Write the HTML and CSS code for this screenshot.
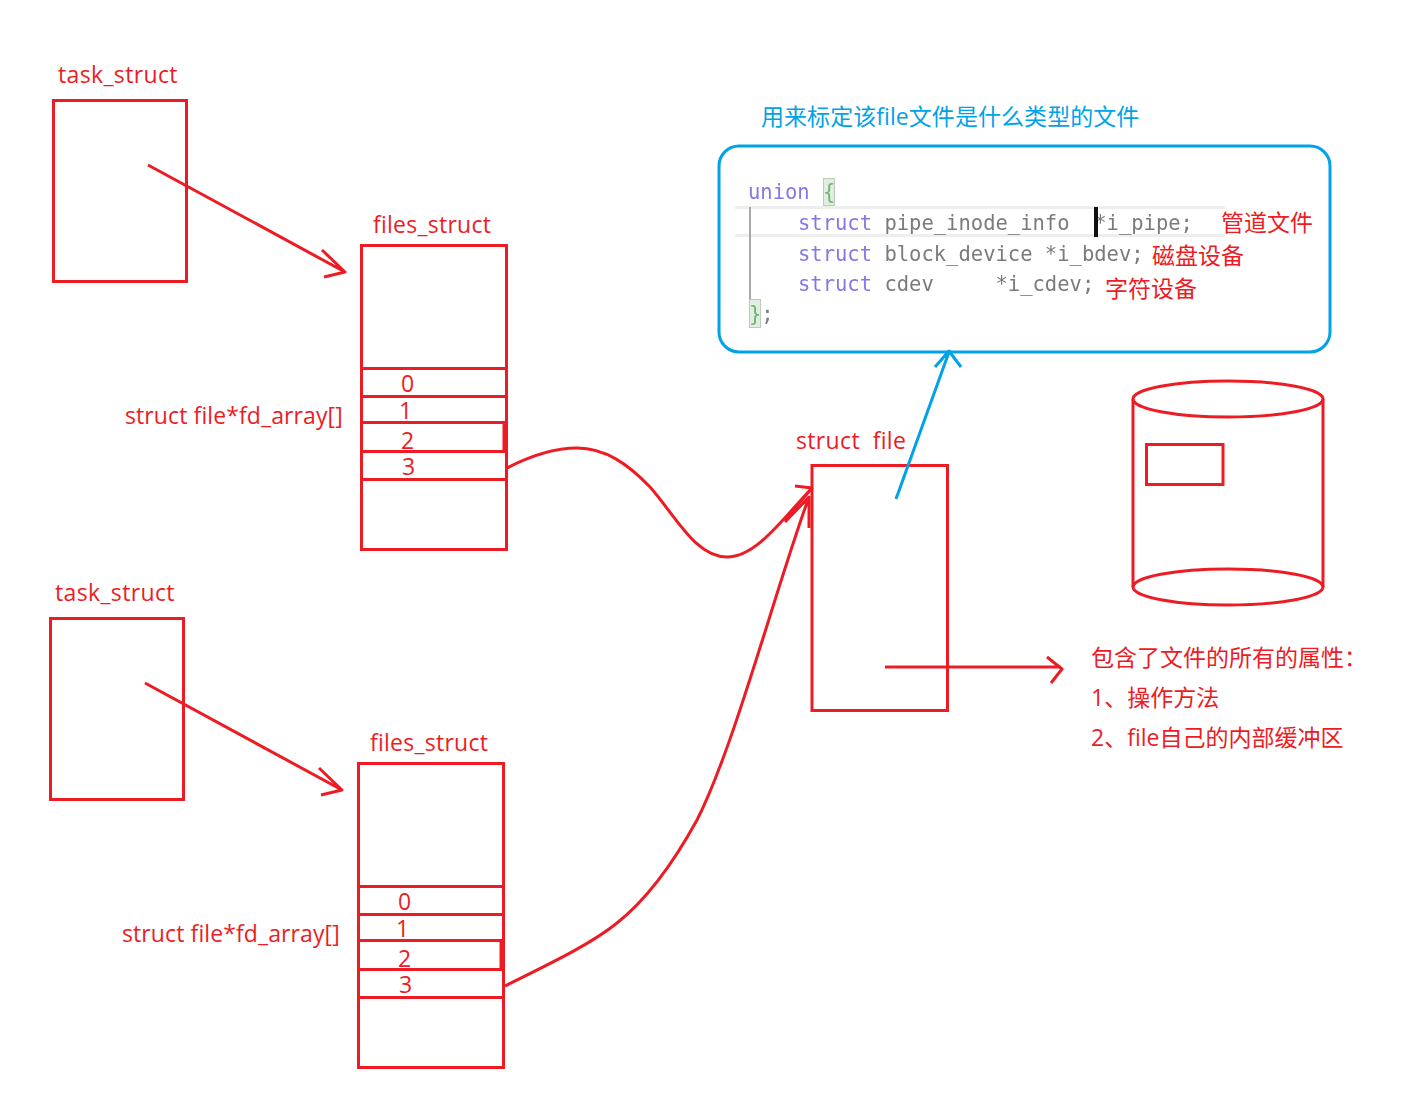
FILE: index.html
```html
<!DOCTYPE html>
<html lang="zh-CN">
<head>
<meta charset="utf-8">
<title>struct file</title>
<link rel="stylesheet" href="styles.css">
</head>
<body>
<svg class="canvas" width="1414" height="1115" viewBox="0 0 1414 1115" xmlns="http://www.w3.org/2000/svg">
  <defs>
    <g id="fdset">
      <text class="lbl latin wide" x="58" y="83">task_struct</text>
      <rect class="r" x="53.5" y="100.5" width="133" height="181"/>
      <path class="r line" d="M148 165 L345 272 M322 250 L345 272 L324 277"/>
      <text class="lbl latin" x="373" y="233">files_struct</text>
      <rect class="r" x="361.5" y="245.5" width="145" height="304"/>
      <path class="r" d="M362 368.500H506M362 396.500H506M362 422.500H506M362 451.500H506M362 479.500H506M504 423V451"/>
      <text class="lbl tight" x="125" y="424">struct file*fd_array[]</text>
      <text class="lbl mid" x="407.500" y="392">0</text>
      <text class="lbl mid" x="405.500" y="419">1</text>
      <text class="lbl mid" x="407.500" y="449">2</text>
      <text class="lbl mid" x="408.500" y="475">3</text>
    </g>
  </defs>

  <use href="#fdset"/>
  <use href="#fdset" x="-3" y="518"/>

  <path class="r line" d="M507 468 C532 455 555 448 577 448 C605 448 628 464 650 487 C675 515 695 557 727 557 C757 557 785 516 812 488 M795 486 L812 488 L785 520"/>
  <path class="r line" d="M505 986 C545 966 590 945 617 923 C650 897 675 860 697 820 C735 745 775 590 809 497 M785 522 L809 497 L809 528"/>

  <text class="lbl wide" x="796" y="449" xml:space="preserve">struct  file</text>
  <rect class="r" x="812" y="465.500" width="135.500" height="245"/>
  <path class="r line" d="M885 667 H1061 M1047 657 L1062 669 L1051 683"/>

  <path class="b line" d="M896 499 L949 352 M935 367 L949 351 L961 367"/>
  <text class="lbl blue" x="761" y="125">用来标定该file文件是什么类型的文件</text>
  <rect class="b" x="719" y="146" width="611" height="206" rx="20"/>

  <g class="code">
    <rect class="hl" x="735" y="206" width="490" height="3"/>
    <rect class="hl" x="735" y="234" width="490" height="3"/>
    <rect class="guide" x="749" y="207" width="2" height="92"/>
    <rect class="brace" x="823.500" y="178.500" width="11" height="27"/>
    <rect class="brace" x="749.500" y="299.500" width="11" height="28"/>
    <text class="kw" x="748" y="199">union</text>
    <text class="br" x="823" y="199">{</text>
    <text x="798" y="230" xml:space="preserve"><tspan class="kw">struct</tspan> pipe_inode_info  *i_pipe;</text>
    <text x="798" y="261" xml:space="preserve"><tspan class="kw">struct</tspan> block_device *i_bdev;</text>
    <text x="798" y="291" xml:space="preserve"><tspan class="kw">struct</tspan> cdev     *i_cdev;</text>
    <text x="749" y="321"><tspan class="br">}</tspan>;</text>
  </g>
  <rect class="caret" x="1094" y="207" width="4" height="30"/>

  <text class="lbl" x="1221" y="231">管道文件</text>
  <text class="lbl" x="1152" y="264">磁盘设备</text>
  <text class="lbl" x="1105" y="297">字符设备</text>

  <g class="r">
    <ellipse cx="1228" cy="399" rx="95" ry="18"/>
    <ellipse cx="1228" cy="587" rx="95" ry="18"/>
    <path d="M1133 399 V587 M1323 399 V587"/>
    <rect x="1146.500" y="444.500" width="76.500" height="40"/>
  </g>

  <text class="lbl" x="1091" y="666">包含了文件的所有的属性：</text>
  <text class="lbl" x="1091" y="706">1、操作方法</text>
  <text class="lbl" x="1091" y="746">2、file自己的内部缓冲区</text>
</svg>
</body>
</html>
```
FILE: styles.css
```css
html, body {
  margin: 0;
  padding: 0;
  background: #ffffff;
}

.canvas {
  display: block;
}

.r {
  fill: none;
  stroke: #ed1c24;
  stroke-width: 3;
}

.b {
  fill: none;
  stroke: #00a2e8;
  stroke-width: 3;
}

.line {
  stroke-linejoin: round;
}

.lbl {
  font-family: "Open Sans", "Noto Sans CJK SC", sans-serif;
  font-size: 23px;
  fill: #ed1c24;
  stroke: none;
}

.latin {
  letter-spacing: 0.25px;
}

.wide {
  letter-spacing: 0.35px;
}

.tight {
  letter-spacing: 0.1px;
}

.mid {
  text-anchor: middle;
}

.blue {
  fill: #00a2e8;
  letter-spacing: 0.06px;
}

.code {
  font-family: "DejaVu Sans Mono", monospace;
  font-size: 20.500px;
  fill: #7b7b7b;
  filter: blur(0.7px);
}

.kw {
  fill: #8379e6;
}

.br {
  fill: #6db56d;
}

.hl {
  fill: #eeeeee;
}

.guide {
  fill: #a8a8a8;
}

.brace {
  fill: #e2ede2;
  stroke: #bccabc;
  stroke-width: 1;
}

.caret {
  fill: #111111;
}
```
